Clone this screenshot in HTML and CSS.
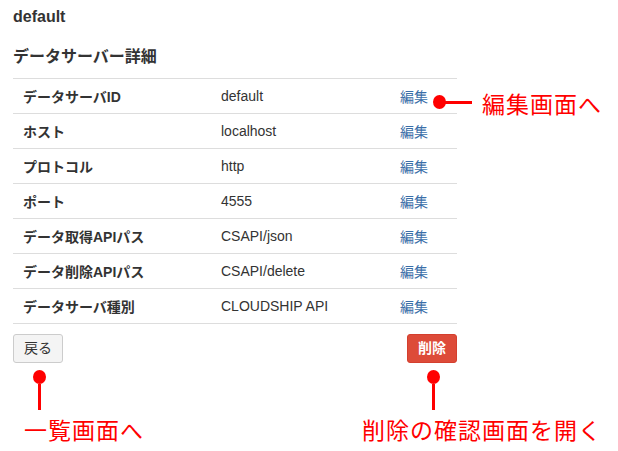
FILE: index.html
```html
<!DOCTYPE html>
<html lang="ja">
<head>
<meta charset="utf-8">
<title>データサーバー詳細</title>
<link rel="stylesheet" href="styles.css">
</head>
<body>
<div class="page">
  <h1 class="title">default</h1>
  <h2 class="section">データサーバー詳細</h2>
  <div class="detail">
    <div class="row"><div class="label">データサーバID</div><div class="value">default</div><div class="edit"><a href="#">編集</a></div></div>
    <div class="row"><div class="label">ホスト</div><div class="value">localhost</div><div class="edit"><a href="#">編集</a></div></div>
    <div class="row"><div class="label">プロトコル</div><div class="value">http</div><div class="edit"><a href="#">編集</a></div></div>
    <div class="row"><div class="label">ポート</div><div class="value">4555</div><div class="edit"><a href="#">編集</a></div></div>
    <div class="row"><div class="label">データ取得APIパス</div><div class="value">CSAPI/json</div><div class="edit"><a href="#">編集</a></div></div>
    <div class="row"><div class="label">データ削除APIパス</div><div class="value">CSAPI/delete</div><div class="edit"><a href="#">編集</a></div></div>
    <div class="row"><div class="label">データサーバ種別</div><div class="value">CLOUDSHIP API</div><div class="edit"><a href="#">編集</a></div></div>
  </div>
  <div class="actions">
    <button class="btn">戻る</button>
    <button class="btn btn-danger">削除</button>
  </div>

  <div class="note note-edit">
    <span class="dot"></span><span class="hline"></span><span class="note-text">編集画面へ</span>
  </div>
  <div class="note note-back">
    <span class="dot"></span><span class="vline"></span><span class="note-text">一覧画面へ</span>
  </div>
  <div class="note note-delete">
    <span class="dot"></span><span class="vline"></span><span class="note-text">削除の確認画面を開く</span>
  </div>
</div>
</body>
</html>
```
FILE: styles.css
```css
html, body {
  margin: 0;
  padding: 0;
  background: #fff;
}

body {
  font-family: "Liberation Sans", Arial, "Noto Sans CJK JP", sans-serif;
  color: #333;
  font-size: 14px;
}

.page {
  position: relative;
  width: 618px;
  height: 451px;
  padding: 0 13px;
  box-sizing: border-box;
}

.title {
  margin: 7px 0 0;
  font-size: 16px;
  line-height: 20px;
  font-weight: bold;
}

.section {
  margin: 20px 0 0;
  font-size: 16px;
  line-height: 20px;
  font-weight: bold;
}

.detail {
  margin-top: 11px;
  width: 444px;
  border-top: 1px solid #ddd;
}

.row {
  display: grid;
  grid-template-columns: 198px 179px 1fr;
  align-items: center;
  height: 34px;
  padding-left: 10px;
  border-bottom: 1px solid #ddd;
}

.label {
  font-weight: bold;
}

.edit a {
  color: #3a6ea8;
  text-decoration: none;
}

.actions {
  margin-top: 10px;
  width: 444px;
  display: flex;
  justify-content: space-between;
}

.btn {
  font-family: "Liberation Sans", Arial, "Noto Sans CJK JP", sans-serif;
  font-size: 14px;
  line-height: 17px;
  padding: 5px 10px;
  border: 1px solid #ccc;
  border-radius: 3px;
  background: #f4f4f4;
  color: #333;
}

.btn-danger {
  background: #dd4b39;
  border-color: #d43f2e;
  color: #fff;
  font-weight: bold;
}

/* annotations */
.note {
  position: absolute;
  color: #ff0000;
}

.dot {
  position: absolute;
  width: 13px;
  height: 14px;
  border-radius: 50%;
  background: #ff0000;
  box-shadow: 0 0 0 2px #fff;
}

.hline {
  position: absolute;
  height: 3px;
  background: #ff0000;
}

.vline {
  position: absolute;
  width: 3px;
  background: #ff0000;
}

.note-text {
  position: absolute;
  white-space: nowrap;
  font-family: "Noto Sans CJK JP", sans-serif;
  font-size: 23px;
  line-height: 24px;
  font-weight: 400;
  letter-spacing: 1px;
}

.note-edit { left: 433px; top: 88px; }
.note-edit .dot { left: 0; top: 0; }
.note-edit .hline { left: 12px; top: 6px; width: 27px; }
.note-edit .note-text { left: 49px; top: -4px; }

.note-back { left: 33px; top: 363px; }
.note-back .dot { left: 0; top: 0; }
.note-back .vline { left: 5px; top: 14px; height: 26px; }
.note-back .note-text { left: -9px; top: 47px; }

.note-delete { left: 427px; top: 363px; }
.note-delete .dot { left: 0; top: 0; }
.note-delete .vline { left: 5px; top: 14px; height: 26px; }
.note-delete .note-text { left: -65px; top: 47px; }
```
